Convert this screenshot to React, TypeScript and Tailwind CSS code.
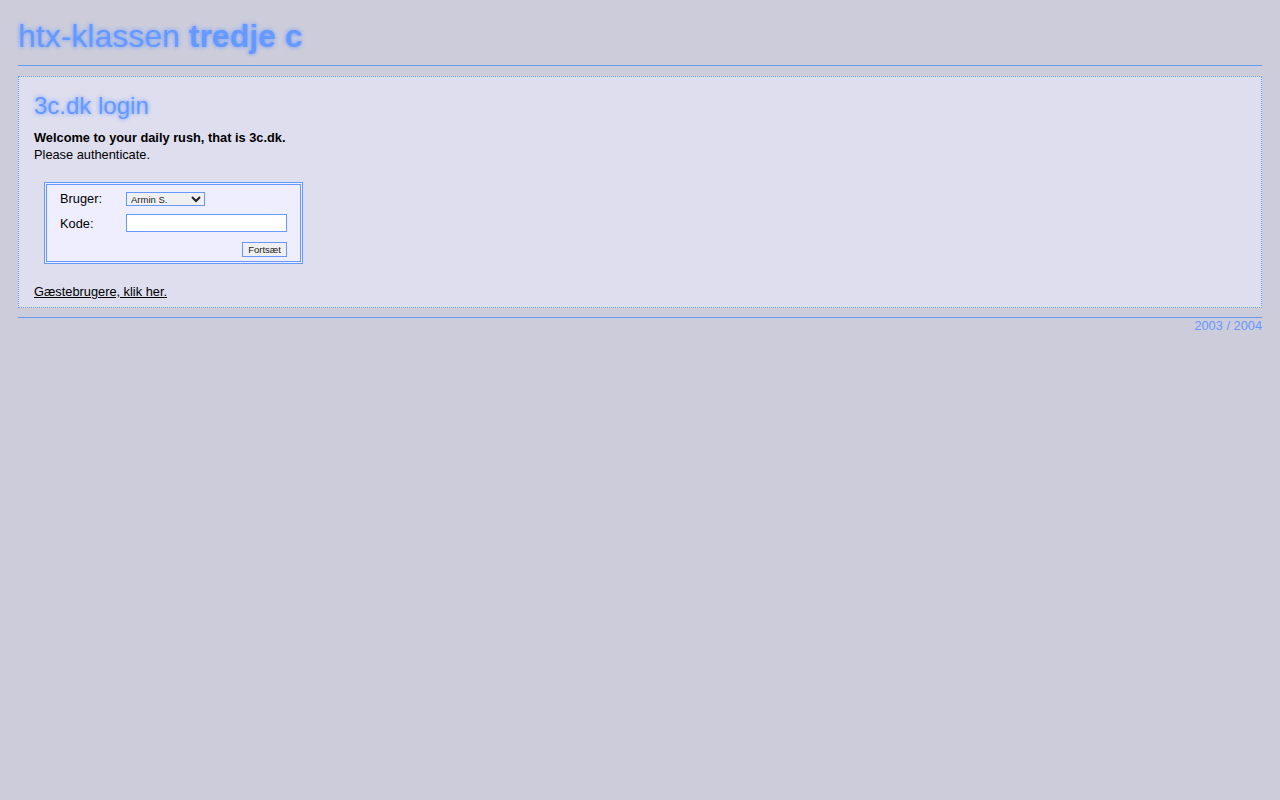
export default function App() {
  return (
    <div className="min-h-[800px] bg-[#ccccdb] px-[18px] pt-[14px] text-[12.8px] text-black [font-family:'Liberation_Sans',Arial,sans-serif]">
      {/* Header */}
      <h1 className="text-[32px] leading-[44px] text-[#6699ff] [text-shadow:0_0_4px_#6699ff]">
        htx-klassen <span className="font-bold">tredje c</span>
      </h1>
      <div className="mt-[7px] h-px bg-[#6699ee]" />

      {/* Login panel */}
      <div className="mt-[10px] border border-dotted border-[#6699ff] bg-[#dedeee] px-[15px] pt-[14px] pb-[7px]">
        <h2 className="text-[24px] leading-[30px] text-[#6699ff] [text-shadow:0_0_4px_#6699ff]">3c.dk login</h2>
        <p className="mt-[8px] leading-[17px] font-bold">Welcome to your daily rush, that is 3c.dk.</p>
        <p className="leading-[17px]">Please authenticate.</p>

        <div className="mt-[19px] ml-[10px] w-[259px] border-[3px] border-double border-[#6699ff] bg-[#eeeeff] px-[13px] pt-[4px] pb-[4px]">
          <div className="flex items-center h-[20px]">
            <span className="w-[66px]">Bruger:</span>
            <select className="h-[14px] w-[79px] border border-[#6699ff] bg-[#f0f0f0] pl-0 text-[9.5px] leading-[12px] text-[#222]">
              <option>Armin S.</option>
            </select>
          </div>
          <div className="flex items-center mt-[4px] h-[20px]">
            <span className="w-[66px] pt-[2px]">Kode:</span>
            <input type="password" className="h-[18px] w-[161px] border border-[#6699ff] bg-white outline-none" />
          </div>
          <div className="flex justify-end mt-[9px]">
            <button className="h-[15px] w-[45px] border border-[#6699ff] bg-[#f0f0f0] text-[9.5px] leading-[13px] text-[#222]">
              Fortsæt
            </button>
          </div>
        </div>

        <a href="#" className="mt-[19px] block leading-[17px] underline text-black">Gæstebrugere, klik her.</a>
      </div>

      {/* Footer */}
      <div className="mt-[9px] h-px bg-[#6699ee]" />
      <div className="text-right leading-[15px] text-[#6699ff]">2003 / 2004</div>
    </div>
  );
}
